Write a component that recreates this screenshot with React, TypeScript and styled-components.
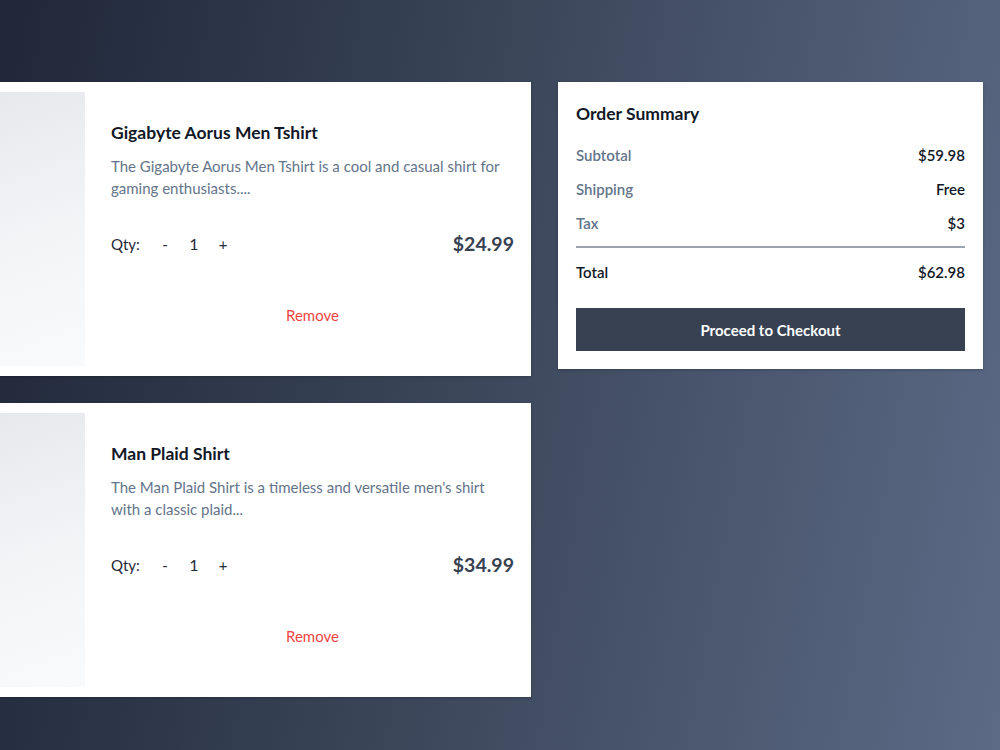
import React from "react";
import styled, { createGlobalStyle } from "styled-components";

const GlobalStyle = createGlobalStyle`
  html, body { margin: 0; padding: 0; }
  body {
    font-family: "Lato", "Noto Sans", "Liberation Sans", sans-serif;
    width: 1000px;
    height: 750px;
    overflow: hidden;
  }
  * { box-sizing: border-box; }
`;

const Page = styled.div`
  width: 1000px;
  height: 750px;
  background: linear-gradient(100deg, #1f2738 0%, #3a4558 45%, #5c6a86 100%);
  padding-top: 82px;
  display: flex;
  align-items: flex-start;
  gap: 27px;
  overflow: hidden;
`;

const Items = styled.div`
  display: flex;
  flex-direction: column;
  gap: 27px;
  width: 600px;
  margin-left: -69px;
  flex-shrink: 0;
`;

const ItemCard = styled.div`
  background: #ffffff;
  height: 294px;
  padding: 10px 17px 10px 10px;
  display: flex;
  gap: 26px;
  box-shadow: 0 1px 3px rgba(0, 0, 0, 0.2);
`;

const Thumb = styled.div`
  width: 144px;
  flex-shrink: 0;
  background: linear-gradient(160deg, #e5e7eb 0%, #f3f4f6 55%, #f9fafb 100%);
`;

const ItemBody = styled.div`
  flex: 1;
  display: flex;
  flex-direction: column;
  padding-top: 29px;
`;

const ItemTitle = styled.h2`
  margin: 0;
  font-size: 17.5px;
  font-weight: 700;
  color: #111827;
  line-height: 24px;
`;

const ItemDesc = styled.p`
  margin: 10px 0 0;
  font-size: 15px;
  line-height: 22px;
  color: #64748b;
`;

const QtyRow = styled.div`
  display: flex;
  align-items: center;
  justify-content: space-between;
  margin-top: 33px;
`;

const Qty = styled.div`
  display: flex;
  align-items: center;
  font-size: 15px;
  color: #1f2937;
`;

const QtyLabel = styled.span`
  width: 48px;
`;

const QtyBtn = styled.button`
  border: none;
  background: none;
  padding: 0;
  font-family: inherit;
  font-size: 15px;
  color: #1f2937;
  width: 12px;
  text-align: center;
  cursor: pointer;
`;

const QtyValue = styled.span`
  width: 46px;
  text-align: center;
  font-size: 16px;
`;

const Price = styled.span`
  font-size: 19.5px;
  font-weight: 700;
  color: #374151;
`;

const RemoveBtn = styled.button`
  align-self: center;
  margin-top: 51px;
  border: none;
  background: none;
  padding: 0;
  font-family: inherit;
  font-size: 15px;
  color: #ef4444;
  cursor: pointer;
`;

const Summary = styled.div`
  width: 425px;
  flex-shrink: 0;
  background: #ffffff;
  padding: 20px 18px 18px;
  box-shadow: 0 1px 3px rgba(0, 0, 0, 0.2);
`;

const SummaryTitle = styled.h2`
  margin: 0 0 12px;
  font-size: 17.5px;
  font-weight: 700;
  color: #111827;
  line-height: 24px;
`;

const Row = styled.div`
  display: flex;
  justify-content: space-between;
  align-items: center;
  height: 34px;
  font-size: 15px;
  font-weight: 600;
`;

const Label = styled.span<{ $dark?: boolean }>`
  color: ${(p) => (p.$dark ? "#111827" : "#64748b")};
`;

const Value = styled.span`
  color: #111827;
`;

const Divider = styled.hr`
  border: none;
  border-top: 2px solid #9ca3af;
  margin: 6px 0 7px;
`;

const Checkout = styled.button`
  margin-top: 19px;
  width: 100%;
  height: 43px;
  border: none;
  background: #374151;
  color: #ffffff;
  font-family: inherit;
  font-size: 15px;
  font-weight: 700;
  cursor: pointer;
`;

const items = [
  {
    title: "Gigabyte Aorus Men Tshirt",
    desc: "The Gigabyte Aorus Men Tshirt is a cool and casual shirt for gaming enthusiasts....",
    price: "$24.99",
  },
  {
    title: "Man Plaid Shirt",
    desc: "The Man Plaid Shirt is a timeless and versatile men's shirt with a classic plaid...",
    price: "$34.99",
  },
];

export default function App() {
  return (
    <>
      <GlobalStyle />
      <Page>
        <Items>
          {items.map((it) => (
            <ItemCard key={it.title}>
              <Thumb />
              <ItemBody>
                <ItemTitle>{it.title}</ItemTitle>
                <ItemDesc>{it.desc}</ItemDesc>
                <QtyRow>
                  <Qty>
                    <QtyLabel>Qty:</QtyLabel>
                    <QtyBtn>-</QtyBtn>
                    <QtyValue>1</QtyValue>
                    <QtyBtn>+</QtyBtn>
                  </Qty>
                  <Price>{it.price}</Price>
                </QtyRow>
                <RemoveBtn>Remove</RemoveBtn>
              </ItemBody>
            </ItemCard>
          ))}
        </Items>
        <Summary>
          <SummaryTitle>Order Summary</SummaryTitle>
          <Row>
            <Label>Subtotal</Label>
            <Value>$59.98</Value>
          </Row>
          <Row>
            <Label>Shipping</Label>
            <Value>Free</Value>
          </Row>
          <Row>
            <Label>Tax</Label>
            <Value>$3</Value>
          </Row>
          <Divider />
          <Row>
            <Label $dark>Total</Label>
            <Value>$62.98</Value>
          </Row>
          <Checkout>Proceed to Checkout</Checkout>
        </Summary>
      </Page>
    </>
  );
}
